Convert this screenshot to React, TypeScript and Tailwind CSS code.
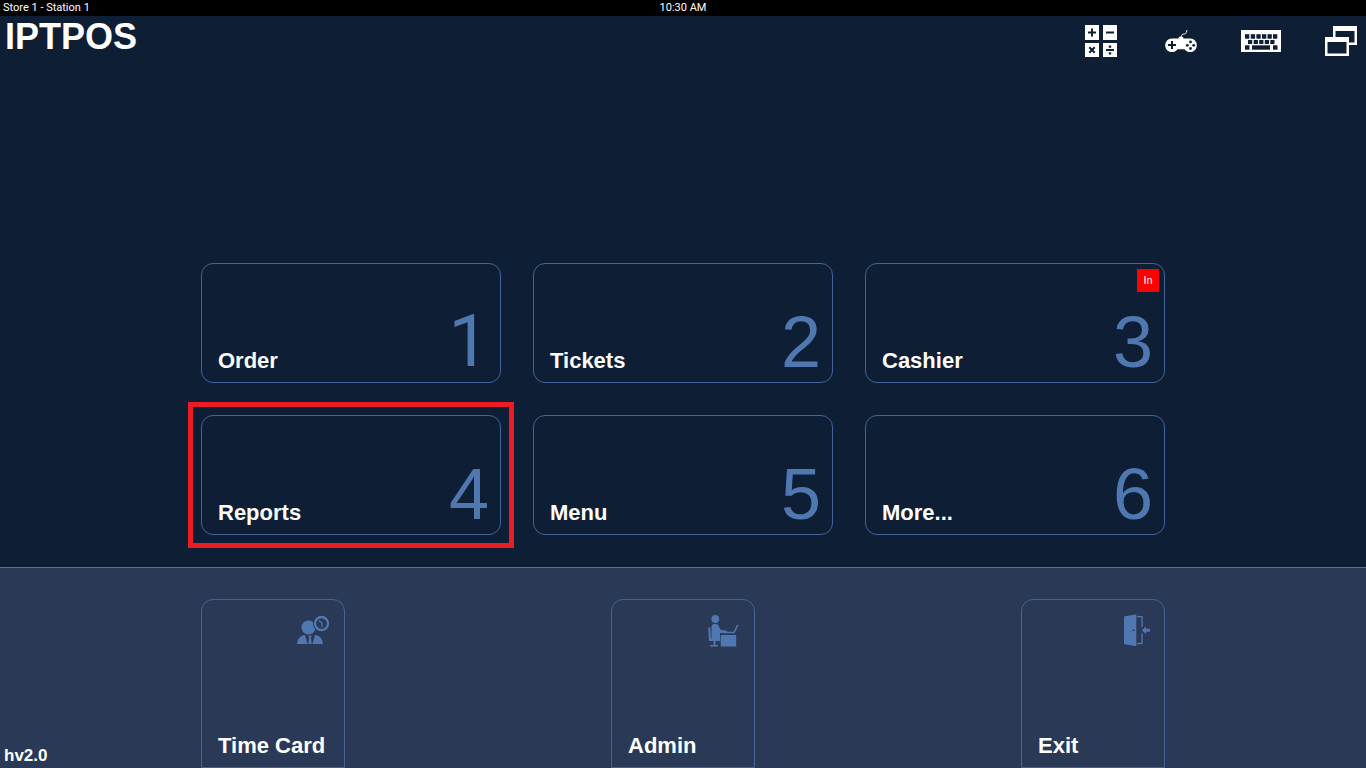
import type { ReactNode } from "react";

const tiles = [
    { id: 1, label: "Order", numberFont: "font-[Roboto,sans-serif]" },
    { id: 2, label: "Tickets" },
    { id: 3, label: "Cashier", badge: "In" },
    { id: 4, label: "Reports", highlighted: true },
    { id: 5, label: "Menu" },
    { id: 6, label: "More..." }
];

const CalculatorIcon = () => (
    <svg viewBox="0 0 32 32" className="w-8 h-8" aria-hidden="true">
        <path fill="#fff" d="M0 0h14v15H0zM18 0h14v15H18zM0 18h14v14H0zM18 18h14v14H18z" />
        <path
            fill="none"
            stroke="#0d1e35"
            strokeWidth="2"
            d="M3 7.5h8M7 3.5v8M21 7.5h8M4.3 22.3l5.4 5.4M9.7 22.3l-5.4 5.4M21 25h8"
        />
        <path fill="#0d1e35" d="M23.800 20.500h2.400v2.300h-2.400zM23.800 27.300h2.400v2.300h-2.400z" />
    </svg>
);

const GamepadIcon = () => (
    <svg viewBox="0 0 32 22" className="w-8 h-[22px]" aria-hidden="true">
        <path fill="none" stroke="#fff" strokeWidth="0.900" d="M16.500 8c-.5-2 0-3.500 1.500-3.800 1.500-.2 3-.2 3.300-1.700L22 0" />
        <path
            fill="#fff"
            d="M7 8.500h6.500c0-1.500 1-2 2.500-2s2.500.5 2.500 2H25a6.800 6.800 0 1 1-5.500 10.800h-7A6.800 6.800 0 1 1 7 8.500z"
        />
        <path fill="none" stroke="#0d1e35" strokeWidth="2" d="M3 15h8M7 11v8" />
        <g fill="#0d1e35">
            <circle cx="25.500" cy="12" r="1.400" />
            <circle cx="25.500" cy="18.500" r="1.400" />
            <circle cx="22.300" cy="15.300" r="1.400" />
            <circle cx="28.700" cy="15.300" r="1.400" />
        </g>
    </svg>
);

const KeyboardIcon = () => (
    <svg viewBox="0 0 40 22" className="w-10 h-[22px]" aria-hidden="true">
        <path fill="#fff" d="M0 0h40v22H0z" />
        <g fill="#0d1e35">
            {[4, 9.8, 15.4, 21, 26.5, 32].map((x) => (
                <rect key={x} x={x} y="4.200" width="4.300" height="4.500" />
            ))}
            {[7, 12.7, 18.2, 23.8, 29.3].map((x) => (
                <rect key={x} x={x} y="10" width="4.200" height="4" />
            ))}
            <rect x="4" y="15.300" width="4.500" height="4.400" />
            <rect x="11" y="15.300" width="18" height="4.400" />
            <rect x="32" y="15.300" width="4.500" height="4.400" />
        </g>
    </svg>
);

const WindowsIcon = () => (
    <svg viewBox="0 0 32 30" className="w-8 h-[30px]" aria-hidden="true">
        <path fill="#fff" d="M8 0h24v19H8z" />
        <path fill="#0d1e35" d="M10.500 5h19v11.500h-19z" />
        <path fill="#fff" d="M0 11h24v19H0z" />
        <path fill="#0d1e35" d="M2.500 16h19v11.500h-19z" />
    </svg>
);

const TimeCardIcon = () => (
    <svg viewBox="0 0 32 32" className="w-8 h-8" fill="#5078b0" aria-hidden="true">
        <circle cx="11.500" cy="12.500" r="7" />
        <path d="M0 29c.5-5 3-8.500 8-9l2.500 9zM26 29c-.5-5-3-8.500-8-9l-2.500 9z" />
        <path d="M11.500 20.500h3l-.6 2.500.8 6h-3.400l.8-6z" />
        <circle cx="24.500" cy="8.500" r="8.500" fill="#2a3a56" />
        <circle cx="24.500" cy="8.500" r="6.500" fill="none" stroke="#5078b0" strokeWidth="2.300" />
        <path fill="none" stroke="#5078b0" strokeWidth="1.300" d="M22 5.500l3 2.500v4" />
    </svg>
);

const AdminIcon = () => (
    <svg viewBox="0 0 32 32" className="w-8 h-8" fill="#5078b0" aria-hidden="true">
        <circle cx="8.300" cy="4" r="3.900" />
        <path d="M4.500 12c0-2 1.300-3.300 3.500-3.300 2 0 3 .8 3.600 2.300l2.200 4 5.200.5c1.500.2 1.500 2.800 0 2.800l-6-.3V26H6c-1.200 0-1.500-.8-1.500-2z" />
        <path d="M1.200 12.500h2l.8 11h7V26H2z" />
        <path d="M6.500 26h2v4h-2zM3 30h8v1.500H3z" />
        <path d="M13.700 20h15.500v11.500H13.700z" />
        <path fill="none" stroke="#5078b0" strokeWidth="1.600" d="M19.500 17.500h7.500l3.700-7.500" />
    </svg>
);

const ExitIcon = () => (
    <svg viewBox="0 0 32 32" className="w-8 h-8 overflow-visible" fill="#5078b0" aria-hidden="true">
        <path d="M7 1.500L19.300-.8v32L7 29z" />
        <circle cx="16.500" cy="15.300" r="1" fill="#2a3a56" />
        <path fill="none" stroke="#5078b0" strokeWidth="1.300" d="M20 1.600h5V12M25 18.500v10h-5" />
        <path d="M25 15.300l4-4v2.500h4v3h-4v2.500z" />
    </svg>
);

const tools: { name: string; icon: ReactNode }[] = [
    { name: "Calculator", icon: <CalculatorIcon /> },
    { name: "Games", icon: <GamepadIcon /> },
    { name: "Keyboard", icon: <KeyboardIcon /> },
    { name: "Windows", icon: <WindowsIcon /> }
];

const shortcuts: { label: string; icon: ReactNode }[] = [
    { label: "Time Card", icon: <TimeCardIcon /> },
    { label: "Admin", icon: <AdminIcon /> },
    { label: "Exit", icon: <ExitIcon /> }
];

export default function App() {
    return (
        <div className="min-h-screen flex flex-col bg-[#0d1e35] text-white font-['Liberation_Sans',Arial,sans-serif]">
            <div className="grid grid-cols-3 h-4 px-[3px] bg-black font-[Roboto,sans-serif] text-[11px] leading-4">
                <span>Store 1 - Station 1</span>
                <span className="text-center">10:30 AM</span>
            </div>

            <header className="flex items-start justify-between px-[5px]">
                <h1 className="text-4xl leading-[42px] font-bold">IPTPOS</h1>
                <nav className="flex gap-10">
                    {tools.map((tool) => (
                        <button
                            key={tool.name}
                            type="button"
                            aria-label={tool.name}
                            className="w-10 h-[50px] flex items-center justify-center"
                        >
                            {tool.icon}
                        </button>
                    ))}
                </nav>
            </header>

            <main className="flex-1 flex items-end justify-center pb-8">
                <div className="grid grid-cols-3 gap-8 w-full max-w-[964px]">
                    {tiles.map((tile) => (
                        <button
                            key={tile.id}
                            type="button"
                            className="relative h-[120px] flex items-end justify-between pl-4 pr-[11px] pb-1 border border-[#426499] rounded-xl"
                        >
                            <span className="pb-[5px] text-[22px] leading-6 font-bold">{tile.label}</span>
                            <span className={`text-7xl leading-none text-[#5078b0] ${tile.numberFont ?? ""}`}>{tile.id}</span>
                            {tile.badge && (
                                <span className="absolute top-[5px] right-[5px] w-[22px] h-[23px] flex items-center justify-center bg-[#ff0000] text-[11px]">
                                    {tile.badge}
                                </span>
                            )}
                            {tile.highlighted && (
                                <span className="absolute -inset-[14px] border-[5px] border-[#ed1c24] pointer-events-none" />
                            )}
                        </button>
                    ))}
                </div>
            </main>

            <footer className="relative flex justify-center pt-[31px] bg-[#2a3a56] border-t border-[#5d7090]">
                <div className="flex justify-between w-full max-w-[964px]">
                    {shortcuts.map((item) => (
                        <button
                            key={item.label}
                            type="button"
                            className="w-36 h-[169px] flex flex-col justify-between pl-4 pr-[15px] pt-[15px] pb-[9px] border border-[#426499] rounded-t-xl"
                        >
                            <span className="self-end">{item.icon}</span>
                            <span className="self-start whitespace-nowrap text-[22px] leading-6 font-bold">
                                {item.label}
                            </span>
                        </button>
                    ))}
                </div>
                <span className="absolute left-1 bottom-[3px] text-[17px] leading-[18px] font-bold">hv2.0</span>
            </footer>
        </div>
    );
}
